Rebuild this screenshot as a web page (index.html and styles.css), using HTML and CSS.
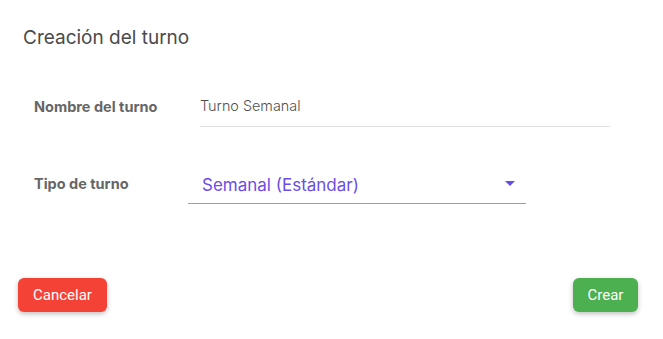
FILE: index.html
```html
<!DOCTYPE html>
<html lang="es">
<head>
<meta charset="utf-8">
<title>Creación del turno</title>
<link rel="stylesheet" href="styles.css">
</head>
<body>
<div class="dialog">
  <h2 class="title">Creación del turno</h2>
  <div class="form">
    <div class="row row-name">
      <label class="label">Nombre del turno</label>
      <div class="input">Turno Semanal</div>
    </div>
    <div class="row row-type">
      <label class="label">Tipo de turno</label>
      <div class="select">
        <span class="select-value">Semanal (Estándar)</span>
        <svg class="arrow" width="10" height="5" viewBox="0 0 10 5"><path d="M0 0 L10 0 L5 5 Z" fill="#6b4de6"/></svg>
      </div>
    </div>
  </div>
  <div class="actions">
    <button class="btn btn-cancel">Cancelar</button>
    <button class="btn btn-create">Crear</button>
  </div>
</div>
</body>
</html>
```

FILE: styles.css
```css
* { box-sizing: border-box; }
html, body { margin: 0; padding: 0; background: #fff; }
body { font-family: Inter, "Noto Sans", sans-serif; }
.dialog {
  width: 663px;
  height: 339px;
  padding: 26px 25px 0 18px;
  display: flex;
  flex-direction: column;
}
.title {
  margin: 0 0 0 5px;
  font-size: 19px;
  font-weight: 400;
  line-height: 24px;
  color: #4a4a4a;
}
.form {
  padding-left: 16px;
  display: flex;
  flex-direction: column;
}
.row { display: flex; align-items: flex-end; }
.row-name { margin-top: 46px; }
.row-type { margin-top: 47px; }
.label {
  width: 154px;
  font-size: 14.5px;
  font-weight: 700;
  color: #666;
  line-height: 20px;
}
.row-name .label { padding-bottom: 10px; }
.row-type .label { padding-bottom: 10px; }
.input {
  margin-left: 12px;
  width: 410px;
  font-size: 14.4px;
  font-weight: 300;
  color: #505050;
  line-height: 20px;
  padding: 0 0 10px 0;
  border-bottom: 1px solid #e0e0e0;
}
.select {
  width: 338px;
  display: flex;
  align-items: center;
  justify-content: space-between;
  padding: 0 11px 7px 14px;
  border-bottom: 1px solid #9e9e9e;
}
.select-value {
  font-size: 17px;
  line-height: 22px;
  color: #6b4de6;
}
.arrow { display: block; margin-top: -4px; }
.actions {
  margin-top: auto;
  margin-bottom: 27px;
  display: flex;
  justify-content: space-between;
}
.btn {
  border: none;
  height: 34px;
  border-radius: 6px;
  color: #fff;
  font-family: Roboto, "Noto Sans", sans-serif;
  font-size: 15px;
  padding: 0;
  box-shadow: 0 2px 5px rgba(0,0,0,0.25);
}
.btn-cancel { background: #f44336; width: 89px; }
.btn-create { background: #4caf50; width: 65px; }
```
